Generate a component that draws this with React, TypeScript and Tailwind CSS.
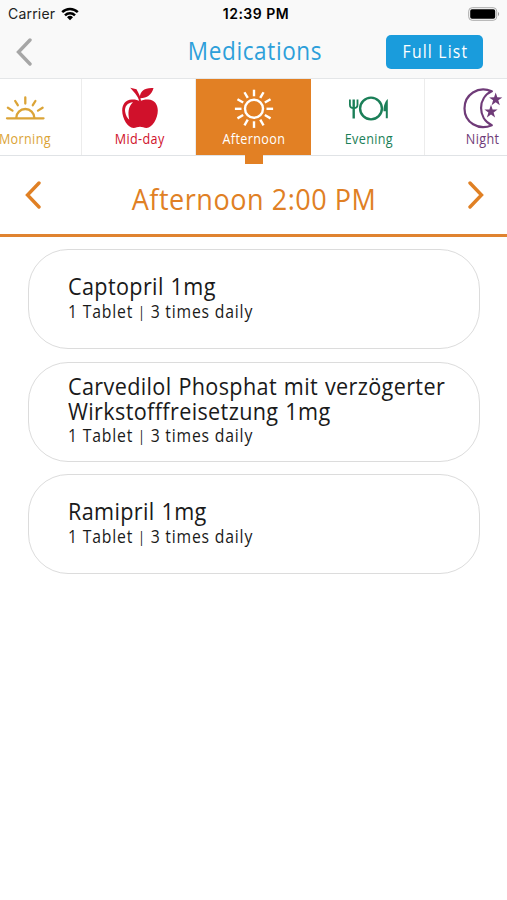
import { FC, ReactNode } from 'react';

type Slot = {
    label: string;
    color: string;
    icon: ReactNode;
};

type Medication = {
    name: string;
    amount: string;
    frequency: string;
};

const SunriseIcon: FC = () => (
    <svg width="40" height="44" viewBox="0 0 40 44" fill="none" stroke="currentColor" strokeWidth="2.3" strokeLinecap="round">
        <path d="M2 33.300H38.500" />
        <path d="M11.300 32.800a9 8.800 0 0 1 18 0" />
        <path d="M20.300 18.500v-6M12.800 20.200l-2.600-4.200M27.800 20.200l2.600-4.200M7.500 25.600l-4.600-2.900M33 25.600l4.600-2.900" />
    </svg>
);

const AppleIcon: FC = () => (
    <svg width="40" height="44" viewBox="0 -1 40 44" fill="currentColor">
        <path d="M20 15.300c-2.500-1.300-5-1.900-8.200-1.700C5.500 13.900 2.200 18.500 2.200 24.500c0 7.800 5.500 17.500 11.300 17.500 2.600 0 4-1.200 6.500-1.200s3.900 1.200 6.500 1.200c5.800 0 11.300-9.700 11.300-17.500 0-6-3.300-10.600-9.600-10.900-3.200-.2-5.700.4-8.200 1.700z" />
        <path d="M21.200 16c-.4-4-2-8-4.700-12.700l-6.300-1.600 5 5.900c2.400 3.200 3.400 5 3.900 7.400z" />
        <path d="M19.800 12.300C19.500 5.500 24.500 1.300 33.500 2 32 8.500 27 12.400 19.800 12.300z" />
        <path d="M13 16.300C7.500 16.800 4.300 20.500 5.200 26c.5 3.300 2 5.800 4.100 7.800C7.800 27 8 21 13 16.300z" fill="#fff" />
    </svg>
);

const SunIcon: FC = () => (
    <svg width="40" height="44" viewBox="0 0 40 44" fill="none" stroke="currentColor" strokeWidth="2.4">
        <circle cx="20" cy="23.800" r="9" />
        {[0, 30, 60, 90, 120, 150, 180, 210, 240, 270, 300, 330].map((angle) => (
            <path key={angle} d="M20 11.300V4.700" transform={`rotate(${angle} 20 23.800)`} />
        ))}
    </svg>
);

const DinnerIcon: FC = () => (
    <svg width="42" height="44" viewBox="0 0 42 44" fill="none" stroke="currentColor">
        <circle cx="23" cy="23.500" r="10.900" strokeWidth="2.400" />
        <path d="M5.700 14.500v19" strokeWidth="2.400" />
        <path d="M1.900 14.500v5.200c0 2.200 1.200 3.400 3.800 3.400s3.800-1.200 3.800-3.400V14.500" strokeWidth="1.800" />
        <path d="M39.800 14v19.300h-2v-7h-2.300c0-5 1.300-9.800 4.300-12.300z" fill="currentColor" stroke="none" />
    </svg>
);

const MoonIcon: FC = () => (
    <svg width="40" height="44" viewBox="0 0 40 44" fill="currentColor">
        <path d="M28.800 6.300C15 .5 1.500 9.500 1.500 23.500S15.500 46 28.800 40.200C14.500 33.500 14.500 12.500 28.800 6.300z" fill="none" stroke="currentColor" strokeWidth="2.200" strokeLinejoin="round" />
        <path d="M32.700 7.600l1.600 4.700 5 .1-4 2.900 1.500 5-4.100-3-4.100 3 1.500-5-4-2.900 5-.1z" />
        <path d="M28 19.800l1.600 4.700 5 .1-4 2.900 1.500 5-4.100-3-4.100 3 1.500-5-4-2.900 5-.1z" />
    </svg>
);

const Chevron: FC<{ className?: string; flip?: boolean }> = ({ className, flip }) => (
    <svg width="16" height="30" viewBox="0 0 16 30" className={className} fill="none" stroke="currentColor" strokeWidth="3.400" strokeLinecap="round">
        <path d={flip ? 'M2 3l11.500 12L2 27' : 'M14 3L2.500 15 14 27'} />
    </svg>
);

const slots: Slot[] = [
    { label: 'Morning', color: 'text-[#dba437]', icon: <SunriseIcon /> },
    { label: 'Mid-day', color: 'text-[#d0112b]', icon: <AppleIcon /> },
    { label: 'Afternoon', color: 'text-white', icon: <SunIcon /> },
    { label: 'Evening', color: 'text-[#1b7f58]', icon: <DinnerIcon /> },
    { label: 'Night', color: 'text-[#6f3b78]', icon: <MoonIcon /> },
];

const medications: Medication[] = [
    { name: 'Captopril 1mg', amount: '1 Tablet', frequency: '3 times daily' },
    { name: 'Carvedilol Phosphat mit verzögerter Wirkstofffreisetzung 1mg', amount: '1 Tablet', frequency: '3 times daily' },
    { name: 'Ramipril 1mg', amount: '1 Tablet', frequency: '3 times daily' },
];

const StatusBar: FC = () => (
    <div className="grid h-[27px] grid-cols-3 items-center pr-[7px] pl-2 font-['Inter',sans-serif] text-[14px] text-[#222]">
        <div className="flex items-center gap-[6px]">
            <span className="tracking-[0.2px]">Carrier</span>
            <svg width="18" height="14" viewBox="0 0 18 14" fill="none" stroke="#000" strokeWidth="2.500">
                <path d="M1.200 5.200a11.200 11.200 0 0 1 15.600 0" />
                <path d="M4 8.300a7.200 7.200 0 0 1 10 0" />
                <path d="M9 13.200L6 10.200a4.300 4.300 0 0 1 6 0z" fill="#000" stroke="none" />
            </svg>
        </div>
        <span className="pl-1 text-center text-[14px] font-semibold tracking-[0.5px] whitespace-nowrap text-black">12:39 PM</span>
        <svg className="justify-self-end" width="32" height="14" viewBox="0 0 32 14">
            <rect x="0.700" y="0.700" width="28" height="12.600" rx="3.500" fill="none" stroke="#aaa" strokeWidth="1" />
            <rect x="2.200" y="2.300" width="25" height="9.500" rx="1.800" />
            <path d="M30 5v4c1.500-.6 1.500-3.400 0-4z" fill="#999" />
        </svg>
    </div>
);

export default function App() {
    return (
        <div className="h-[900px] w-full overflow-hidden bg-white font-['Open_Sans','Noto_Sans',sans-serif]">
            <header className="h-[79px] border-b border-[#e4e6e8] bg-[#f9f9f9]">
                <StatusBar />
                <div className="grid h-[50px] grid-cols-[1fr_auto_1fr] items-center pr-6 pl-4">
                    <Chevron className="text-[#a6a6a6]" />
                    <h1 className="scale-x-90 pb-[4px] pl-[12px] text-[25px] leading-[46px] tracking-[0.700px] whitespace-nowrap text-[#2d9fda]">Medications</h1>
                    <button className="h-[34px] w-[97px] justify-self-end rounded-[5px] bg-[#1a9cdc] pb-[3px] text-[17.500px] leading-[30px] text-white">
                        <span className="inline-block scale-x-90 pl-px tracking-[1.300px]">Full List</span>
                    </button>
                </div>
            </header>

            <nav className="flex h-[77px] justify-center border-b border-[#e0e3e6]">
                {slots.map((slot) => (
                    <div
                        key={slot.label}
                        className={`${slot.color} ${slot.label === 'Afternoon' ? 'relative h-[76px] bg-[#e28024]' : 'border-r border-[#ececec] pl-[2px]'} flex w-[114.500px] shrink-0 flex-col items-center pt-[6px]`}
                    >
                        {slot.icon}
                        <span className="scale-x-90 text-[14px] leading-[20px] tracking-[0.400px]">{slot.label}</span>
                        {slot.label === 'Afternoon' && <span className="absolute top-[75px] left-[48.500px] h-[10px] w-[18px] bg-[#e28024]" />}
                    </div>
                ))}
            </nav>

            <section className="flex h-[81px] items-center justify-between border-b-[3px] border-[#e08330] pr-[23px] pl-[25px] text-[#e08024]">
                <Chevron />
                <h2 className="scale-x-90 pt-2 pr-[2px] text-[30px] leading-[40px] tracking-[0.600px]">Afternoon 2:00 PM</h2>
                <Chevron flip />
            </section>

            <main className="flex flex-col gap-[12.500px] px-[27.500px] pt-3">
                {medications.map((med) => (
                    <div key={med.name} className="flex h-[100px] flex-col justify-center rounded-[40px] border border-[#dcdcdc] pl-[39px] text-[#1a1a1a]">
                        <p className="w-[440px] origin-left scale-x-90 text-[24px] leading-[24.500px] tracking-[0.400px] [word-spacing:1px]">{med.name}</p>
                        <p className="origin-left scale-x-90 text-[17.500px] leading-[24.500px] tracking-[0.900px] whitespace-nowrap">
                            {med.amount} <span className="align-[1px] text-[14px]">|</span> {med.frequency}
                        </p>
                    </div>
                ))}
            </main>
        </div>
    );
}
